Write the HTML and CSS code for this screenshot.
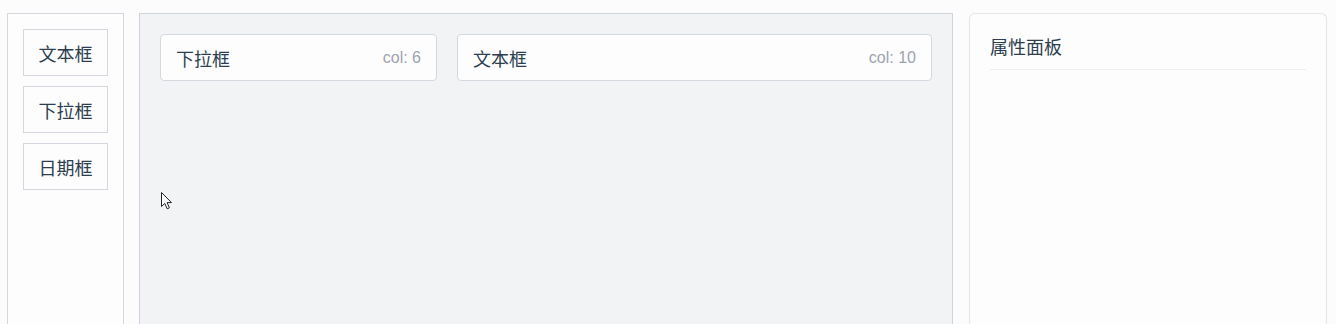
FILE: index.html
```html
<!DOCTYPE html>
<html lang="zh-CN">
<head>
<meta charset="utf-8">
<title>表单设计器</title>
<link rel="stylesheet" href="styles.css">
</head>
<body>
<div class="app">
  <aside class="palette">
    <div class="palette-item">文本框</div>
    <div class="palette-item">下拉框</div>
    <div class="palette-item">日期框</div>
  </aside>
  <main class="canvas">
    <div class="grid">
      <div class="field span-6"><span class="field-label">下拉框</span><span class="field-col">col: 6</span></div>
      <div class="field span-10"><span class="field-label">文本框</span><span class="field-col">col: 10</span></div>
    </div>
    <svg class="cursor" width="13" height="20" viewBox="0 0 13 20">
      <path d="M1.5 1.5 L1.5 15.5 L4.8 12.4 L7.2 17.8 L9.4 16.8 L7.1 11.6 L11.5 11.6 Z" fill="#fff" stroke="#222" stroke-width="1" stroke-linejoin="round"/>
    </svg>
  </main>
  <section class="props">
    <h3 class="props-title">属性面板</h3>
  </section>
</div>
</body>
</html>
```

FILE: styles.css
```css
* { box-sizing: border-box; }
html, body { margin: 0; padding: 0; }
body {
  background: #fcfcfc;
  font-family: "Liberation Sans", Arial, "Noto Sans CJK SC", sans-serif;
  color: #2c3e50;
  height: 324px;
  overflow: hidden;
}
.app {
  display: flex;
  align-items: flex-start;
  padding: 13px 0 0 7px;
}
.palette {
  width: 117px;
  height: 311px;
  border: 1px solid #d4d7de;
  border-bottom: 0;
  padding: 15px;
  display: flex;
  flex-direction: column;
  gap: 10px;
  background: #fdfdfd;
}
.palette-item {
  height: 47px;
  border: 1px solid #d4d7de;
  display: flex;
  align-items: center;
  justify-content: center;
  font-size: 18px;
  font-family: "Noto Sans CJK SC", sans-serif;
  color: #2c3e50;
  background: #fdfdfd;
}
.canvas {
  position: relative;
  margin-left: 15px;
  width: 814px;
  height: 311px;
  background: #f2f3f5;
  border: 1px solid #d1d5db;
  border-bottom: 0;
  padding: 20px;
}
.grid {
  display: grid;
  grid-template-columns: repeat(16, 1fr);
  gap: 20px;
}
.span-6 { grid-column: span 6; }
.span-10 { grid-column: span 10; }
.field {
  height: 47px;
  background: #fdfdfd;
  border: 1px solid #d5d8df;
  border-radius: 4px;
  display: flex;
  align-items: center;
  justify-content: space-between;
  padding: 0 15px;
}
.field-label {
  font-family: "Noto Sans CJK SC", sans-serif;
  font-size: 18px;
  color: #2c3e50;
}
.field-col {
  font-size: 16px;
  color: #9ca3af;
}
.cursor {
  position: absolute;
  left: 20px;
  top: 177px;
}
.props {
  margin-left: 16px;
  width: 358px;
  height: 311px;
  border: 1px solid #e3e5e8;
  border-bottom: 0;
  border-radius: 6px 6px 0 0;
  padding: 20px;
  background: #fdfdfd;
}
.props-title {
  margin: 0;
  font-family: "Noto Sans CJK SC", sans-serif;
  font-weight: normal;
  font-size: 18px;
  line-height: 24px;
  padding-bottom: 11px;
  border-bottom: 1px solid #eeeff1;
  color: #2c3e50;
}
```
